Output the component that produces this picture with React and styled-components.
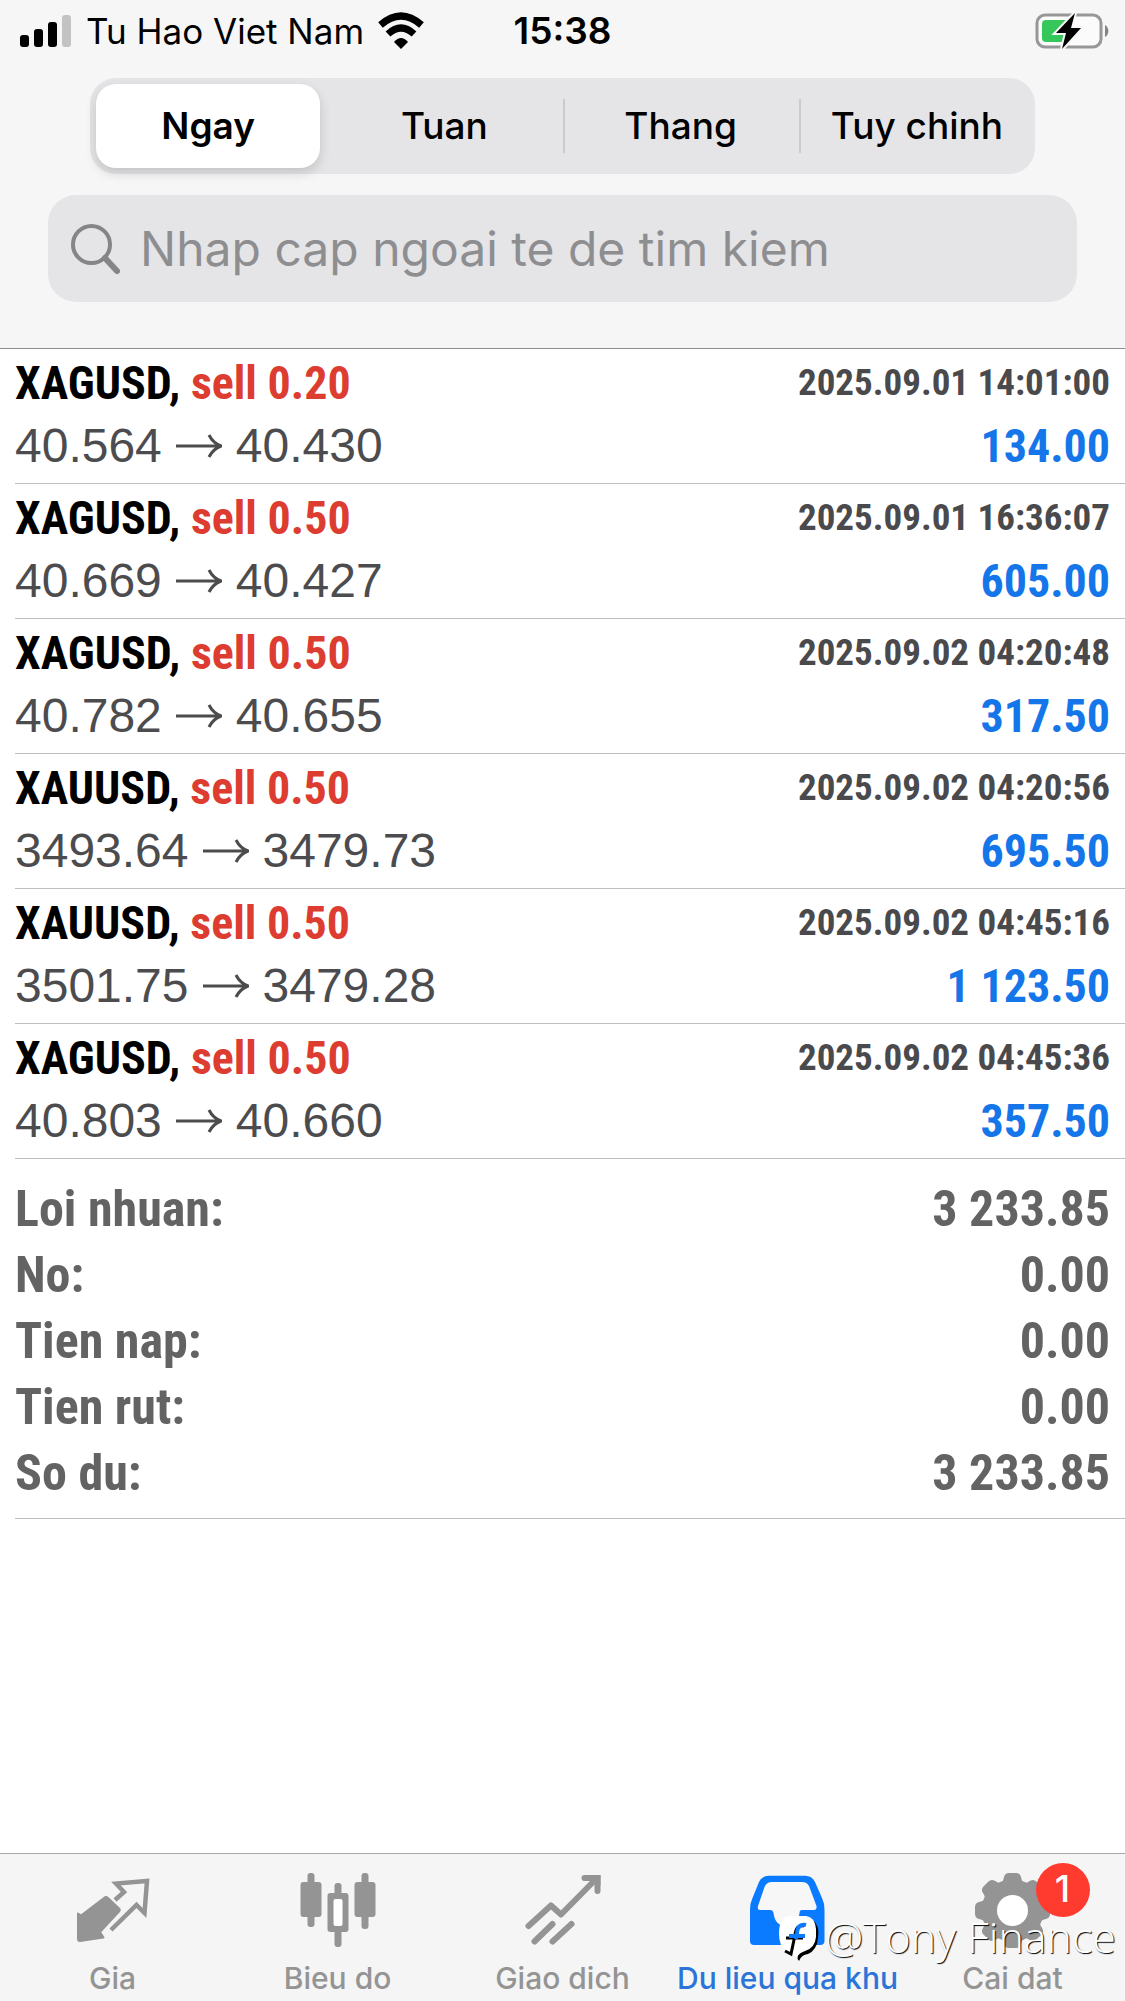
import React, { useState } from "react";
import styled, { createGlobalStyle } from "styled-components";

const ui = `Inter, "Liberation Sans", sans-serif`;
const narrow = `"Roboto Condensed", Roboto, "Liberation Sans", sans-serif`;

const GlobalStyle = createGlobalStyle`
  *, *::before, *::after { box-sizing: border-box; }
  body { margin: 0; background: #fff; font-family: ${ui}; }
  button, input { font: inherit; color: inherit; border: 0; background: none; padding: 0; margin: 0; }
  h2, p, dl, dt, dd, ul { margin: 0; padding: 0; }
`;

const Screen = styled.div`
  min-height: 100vh;
  display: flex;
  flex-direction: column;
  background: #fff;
`;

const Header = styled.header`
  background: #f6f6f6;
  border-bottom: 1px solid #8e8e90;
  padding-bottom: 46px;
`;

const StatusBar = styled.div`
  display: grid;
  grid-template-columns: 1fr auto 1fr;
  align-items: center;
  height: 62px;
  padding: 0 15px;
  color: #000;
`;

const Carrier = styled.div`
  display: flex;
  align-items: center;
  gap: 14px;
  padding-left: 5px;
  font-size: 35px;
  line-height: 40px;
  white-space: nowrap;
`;

const Clock = styled.time`
  font-size: 37px;
  line-height: 40px;
  font-weight: 600;
`;

const BatterySlot = styled.div`
  display: flex;
  justify-content: flex-end;
`;

const Segments = styled.div`
  display: grid;
  grid-template-columns: repeat(4, 1fr);
  height: 96px;
  margin: 16px 90px 0;
  border-radius: 26px;
  background: #e5e5e7;
`;

const SegmentCell = styled.div`
  display: flex;
  align-items: center;
  padding: 6px;
  & + & + &::before {
    content: "";
    width: 2px;
    height: 54px;
    margin: 0 4px 0 -6px;
    background: #cbcbce;
  }
`;

const Segment = styled.button`
  flex: 1;
  height: 84px;
  border-radius: 20px;
  font-size: 37px;
  line-height: 44px;
  white-space: nowrap;
  font-weight: ${(p) => (p.$active ? 600 : 500)};
  background: ${(p) => (p.$active ? "#fff" : "transparent")};
  box-shadow: ${(p) => (p.$active ? "0 5px 12px rgba(0, 0, 0, 0.15)" : "none")};
`;

const SearchBox = styled.label`
  display: flex;
  align-items: center;
  gap: 20px;
  height: 107px;
  margin: 21px 48px 0;
  padding: 0 22px;
  border-radius: 28px;
  background: #e5e5e7;
  color: #858588;
`;

const SearchInput = styled.input`
  flex: 1;
  min-width: 0;
  outline: none;
  font-size: 48px;
  line-height: 58px;
  color: #333;
  &::placeholder { color: #8e8e91; opacity: 1; }
`;

const Main = styled.main`
  flex: 1;
`;

const DealList = styled.ul`
  list-style: none;
`;

const Deal = styled.li`
  height: 135px;
  margin-left: 15px;
  padding: 2px 15px 0 0;
  border-bottom: 1px solid #bebec0;
`;

const DealLine = styled.div`
  display: flex;
  justify-content: space-between;
  align-items: center;
  height: 63px;
  white-space: nowrap;
`;

const Symbol = styled.h2`
  font: bold 46px/60px ${narrow};
  color: #000;
`;

const Side = styled.span`
  color: #dc3d30;
`;

const Stamp = styled.time`
  font: bold 37px/60px ${narrow};
  color: #4a4a4d;
`;

const Prices = styled.p`
  display: flex;
  align-items: center;
  gap: 14px;
  font: 48px/60px "Liberation Sans", Arial, sans-serif;
  color: #4c4c4f;
`;

const Profit = styled.p`
  font: bold 46px/60px ${narrow};
  color: #1576ea;
`;

const Summary = styled.dl`
  margin-left: 15px;
  padding: 17px 15px 12px 0;
  border-bottom: 1px solid #bebec0;
`;

const SummaryRow = styled.div`
  display: flex;
  justify-content: space-between;
  font: bold 50px/66px ${narrow};
  color: #636363;
`;

const Footer = styled.footer`
  position: relative;
  background: #f5f5f5;
  border-top: 1px solid #a9a9ab;
`;

const TabBar = styled.nav`
  display: grid;
  grid-template-columns: repeat(5, 1fr);
  height: 147px;
`;

const Tab = styled.a`
  display: flex;
  flex-direction: column;
  align-items: center;
  gap: 10px;
  padding-top: 16px;
  font-size: 30px;
  line-height: 36px;
  font-weight: 500;
  white-space: nowrap;
  text-decoration: none;
  color: ${(p) => (p.$active ? "#2b74d8" : "#949494")};
`;

const IconSlot = styled.span`
  position: relative;
  display: block;
  width: 80px;
  height: 80px;
`;

const Badge = styled.span`
  position: absolute;
  top: -7px;
  right: -37px;
  width: 54px;
  height: 54px;
  border-radius: 50%;
  background: #ff3b30;
  color: #fff;
  font-size: 37px;
  line-height: 52px;
  text-align: center;
`;

const Watermark = styled.div`
  position: absolute;
  right: 9px;
  bottom: 37px;
  display: flex;
  align-items: center;
  gap: 4px;
  pointer-events: none;
  font: 300 43px/54px "Open Sans", "Noto Sans", sans-serif;
  color: #fff;
  text-shadow: 1px 1px 1px #000;
  white-space: nowrap;
`;

const SignalIcon = () => (
  <svg width="52" height="40" viewBox="0 0 52 40" aria-hidden="true">
    <rect x="0" y="24" width="9" height="12" rx="3" />
    <rect x="14" y="18" width="9" height="18" rx="3" />
    <rect x="28" y="11" width="9" height="25" rx="3" />
    <rect x="42" y="4" width="9" height="32" rx="3" fill="#c3c3c3" />
  </svg>
);

const WifiIcon = () => (
  <svg width="46" height="38" viewBox="0 0 46 38" aria-hidden="true">
    <g fill="none" stroke="#000" strokeWidth="7">
      <path d="M2.500 13 Q23 -5 43.500 13" />
      <path d="M10 22 Q23 10 36 22" />
    </g>
    <path d="M16 30 Q23 22 30 30 L23 37 Z" />
  </svg>
);

const BatteryIcon = () => (
  <svg width="75" height="38" viewBox="0 0 75 38" aria-hidden="true">
    <rect x="2" y="3" width="64" height="32" rx="8" fill="#fbfbfb" stroke="#97979a" strokeWidth="3" />
    <path d="M70 13 a7 7 0 0 1 0 12 Z" fill="#858588" />
    <path d="M11 8 H34 L27 30 H11 Q7 30 7 26 V12 Q7 8 11 8 Z" fill="#35c759" />
    <path d="M40 1 L21 21 H31 L27 37 L46 16 H36 Z" stroke="#f8f8f8" strokeWidth="4" paintOrder="stroke" />
  </svg>
);

const SearchIcon = () => (
  <svg width="50" height="52" viewBox="0 0 50 52" fill="none" stroke="#858588" strokeWidth="4" strokeLinecap="round" aria-hidden="true">
    <circle cx="21.500" cy="21.500" r="18.500" />
    <path d="M35 35 L47 48" strokeWidth="6" />
  </svg>
);

const ArrowIcon = () => (
  <svg width="46" height="26" viewBox="0 0 46 26" fill="none" stroke="#4c4c4f" strokeWidth="3" aria-label="to">
    <path d="M0 13 H44 M33 2 Q37 10 45 13 Q37 16 33 24" />
  </svg>
);

const QuotesIcon = () => (
  <svg width="80" height="80" viewBox="0 0 80 80" aria-hidden="true">
    <path d="M5 43.500 L8 45.500 L31 28 Q33 26 35 28 L46 38.500 Q47.500 40 46 41.500 L27 62 L30.500 67.500 L7 71 Q5 71 5 69 Z" fill="#949494" stroke="#949494" strokeWidth="2" strokeLinejoin="round" />
    <path d="M42 30 L51 22 L43 13.500 L74 11 L71.500 43 L63.500 35 L38 60" fill="none" stroke="#949494" strokeWidth="4.500" />
  </svg>
);

const ChartIcon = () => (
  <svg width="80" height="80" viewBox="0 0 80 80" fill="#949494" aria-hidden="true">
    <rect x="9.500" y="3" width="7" height="54" rx="3" />
    <rect x="2.500" y="12" width="21" height="35" rx="3" />
    <rect x="36.500" y="13" width="7" height="64" rx="3" />
    <rect x="29.500" y="23" width="21" height="39" rx="3" />
    <rect x="35.500" y="29" width="9" height="27" rx="2" fill="#fff" />
    <rect x="63.500" y="3" width="7" height="56" rx="3" />
    <rect x="56.500" y="12" width="21" height="35" rx="3" />
  </svg>
);

const TradeIcon = () => (
  <svg width="80" height="80" viewBox="0 0 80 80" fill="none" stroke="#949494" strokeWidth="6" strokeLinecap="round" aria-hidden="true">
    <path d="M5.500 56 L28 35.500 L38 44.500 L73 9" strokeLinejoin="round" />
    <path d="M61.500 8 H74.500 V21" />
    <path d="M67 5 H77.500 V16 Z" fill="#949494" stroke="none" />
    <path d="M11.500 71.500 L29.500 54 M29.500 71.500 L48.500 54" />
  </svg>
);

const HistoryIcon = () => (
  <svg width="80" height="80" viewBox="0 0 80 80" aria-hidden="true">
    <path d="M22 5.700 H57 Q64 5.700 67 12 L74 28 Q76.500 33 76.500 40 V71 Q76.500 75 72 75 H6 Q2 75 2 71 V40 Q2 33 4.500 28 L11 12 Q14 5.700 21 5.700 Z" fill="#0a7aff" />
    <path d="M24 12 H54 Q59 12 61 16 L68.500 36 Q69 40 66 40 H54 Q51.500 40 51.500 43 Q50 56 38.500 56 Q27 56 25.500 43 Q25 40 22 40 H12 Q9 40 10 36 L16.500 17 Q18.500 12 24 12 Z" fill="#f7f7f7" />
  </svg>
);

const SettingsIcon = () => (
  <svg width="80" height="80" viewBox="0 0 80 80" aria-hidden="true">
    <g fill="#949494">
      <circle cx="39.500" cy="40.500" r="31" />
      {[0, 45, 90, 135, 180, 225, 270, 315].map((angle) => (
        <path key={angle} transform={`rotate(${angle} 39.500 40.500)`} d="M26 14 Q30 13 31 7 Q32 3 36 3 H43 Q47 3 48 7 Q49 13 53 14 L48 22 H31 Z" />
      ))}
    </g>
    <circle cx="39.500" cy="40.500" r="15.500" fill="#fff" />
  </svg>
);

const WatermarkLogo = () => (
  <svg width="44" height="50" viewBox="0 0 44 50" aria-hidden="true">
    <path d="M36 8 Q43 14 41 26 Q40 38 31 42 Q24 43 22 49 Q18 44 24 40 Z" fill="#000" />
    <path d="M12 4 H29 Q38 5 39 17 V25 Q38 36 28 39 Q22 41 20 45 L12 42 L9 41 Q2 33 2 22 Q2 5 12 4 Z" fill="#fff" />
    <path d="M27 14 Q19 12 18 23 L14 42 L8 39 M9 26 H26" fill="none" stroke="#000" strokeWidth="3" />
    <path d="M29 13 Q21 11 20 21 L19 27 M12 24 H28" fill="none" stroke="#0a7aff" strokeWidth="4" />
  </svg>
);

const periods = ["Ngay", "Tuan", "Thang", "Tuy chinh"];

const deals = [
  ["XAGUSD", "0.20", "40.564", "40.430", "2025.09.01 14:01:00", "134.00"],
  ["XAGUSD", "0.50", "40.669", "40.427", "2025.09.01 16:36:07", "605.00"],
  ["XAGUSD", "0.50", "40.782", "40.655", "2025.09.02 04:20:48", "317.50"],
  ["XAUUSD", "0.50", "3493.64", "3479.73", "2025.09.02 04:20:56", "695.50"],
  ["XAUUSD", "0.50", "3501.75", "3479.28", "2025.09.02 04:45:16", "1 123.50"],
  ["XAGUSD", "0.50", "40.803", "40.660", "2025.09.02 04:45:36", "357.50"],
];

const totals = [
  ["Loi nhuan:", "3 233.85"],
  ["No:", "0.00"],
  ["Tien nap:", "0.00"],
  ["Tien rut:", "0.00"],
  ["So du:", "3 233.85"],
];

const tabs = [
  { label: "Gia", Icon: QuotesIcon },
  { label: "Bieu do", Icon: ChartIcon },
  { label: "Giao dich", Icon: TradeIcon },
  { label: "Du lieu qua khu", Icon: HistoryIcon, active: true },
  { label: "Cai dat", Icon: SettingsIcon, badge: "1" },
];

export default function App() {
  const [period, setPeriod] = useState("Ngay");
  return (
    <Screen>
      <GlobalStyle />
      <Header>
        <StatusBar>
          <Carrier>
            <SignalIcon />
            Tu Hao Viet Nam
            <WifiIcon />
          </Carrier>
          <Clock>15:38</Clock>
          <BatterySlot>
            <BatteryIcon />
          </BatterySlot>
        </StatusBar>
        <Segments>
          {periods.map((name) => (
            <SegmentCell key={name}>
              <Segment type="button" $active={name === period} aria-pressed={name === period} onClick={() => setPeriod(name)}>
                {name}
              </Segment>
            </SegmentCell>
          ))}
        </Segments>
        <SearchBox>
          <SearchIcon />
          <SearchInput type="text" aria-label="Nhap cap ngoai te de tim kiem" placeholder="Nhap cap ngoai te de tim kiem" />
        </SearchBox>
      </Header>
      <Main>
        <DealList>
          {deals.map(([symbol, volume, open, close, time, profit]) => (
            <Deal key={time}>
              <DealLine>
                <Symbol>
                  {symbol}, <Side>sell {volume}</Side>
                </Symbol>
                <Stamp>{time}</Stamp>
              </DealLine>
              <DealLine>
                <Prices>
                  <span>{open}</span>
                  <ArrowIcon />
                  <span>{close}</span>
                </Prices>
                <Profit>{profit}</Profit>
              </DealLine>
            </Deal>
          ))}
        </DealList>
        <Summary>
          {totals.map(([label, value]) => (
            <SummaryRow key={label}>
              <dt>{label}</dt>
              <dd>{value}</dd>
            </SummaryRow>
          ))}
        </Summary>
      </Main>
      <Footer>
        <TabBar>
          {tabs.map(({ label, Icon, active, badge }) => (
            <Tab key={label} href="#" $active={active} aria-current={active ? "page" : undefined}>
              <IconSlot>
                <Icon />
                {badge && <Badge>{badge}</Badge>}
              </IconSlot>
              {label}
            </Tab>
          ))}
        </TabBar>
        <Watermark>
          <WatermarkLogo />
          @Tony Finance
        </Watermark>
      </Footer>
    </Screen>
  );
}
